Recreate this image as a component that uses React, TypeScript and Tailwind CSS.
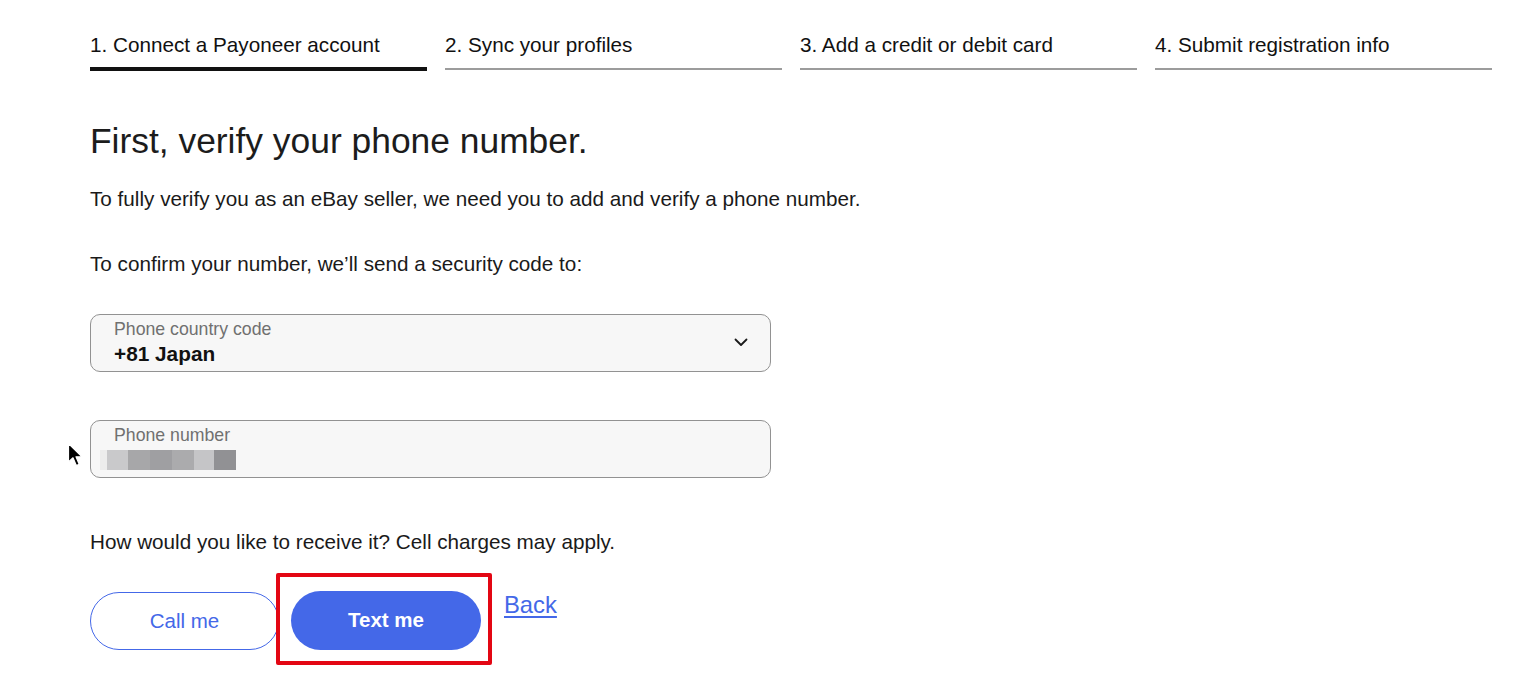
import React from "react";

const tabs = [
  "1. Connect a Payoneer account",
  "2. Sync your profiles",
  "3. Add a credit or debit card",
  "4. Submit registration info",
];

const blocks = [
  { w: 7, c: "#ececec" },
  { w: 21, c: "#c9c9cb" },
  { w: 22, c: "#a7a7a9" },
  { w: 22, c: "#9f9fa2" },
  { w: 22, c: "#ababad" },
  { w: 20, c: "#c5c5c7" },
  { w: 22, c: "#919194" },
];

export default function App() {
  return (
    <div
      className="relative w-[1536px] h-[686px] bg-white overflow-hidden pl-[90px] pr-[44px] pt-[32px] text-[#1a1a1a]"
      style={{ fontFamily: '"Liberation Sans", Arial, sans-serif' }}
    >
      {/* Tabs */}
      <div className="grid grid-cols-4 gap-x-[18px]">
        {tabs.map((t, i) => (
          <div key={t} className="flex flex-col">
            <div className="text-[20.7px] leading-[26px] h-[35px] text-[#111] whitespace-nowrap">{t}</div>
            {i === 0 ? (
              <div className="h-[4px] bg-[#111]" />
            ) : (
              <div className="h-[2px] mt-[1px] bg-[#9c9c9c]" />
            )}
          </div>
        ))}
      </div>

      <h1 className="mt-[50px] text-[35.4px] leading-[40px] text-[#1c1c1c]">
        First, verify your phone number.
      </h1>
      <p className="mt-[25px] text-[20.7px] leading-[26px]">
        To fully verify you as an eBay seller, we need you to add and verify a phone number.
      </p>
      <p className="mt-[39px] text-[20.7px] leading-[26px]">
        To confirm your number, we’ll send a security code to:
      </p>

      {/* Select */}
      <div className="mt-[37px] w-[681px] h-[58px] rounded-[10px] border border-[#929292] bg-[#f7f7f7] flex items-center pl-[23px] pr-[22px]">
        <div className="flex-1 flex flex-col pb-[1px]">
          <span className="text-[17.7px] leading-[20px] text-[#707070]">Phone country code</span>
          <span className="mt-[3px] text-[20.8px] leading-[24px] font-bold text-[#111]">+81 Japan</span>
        </div>
        <svg width="14" height="9" viewBox="0 0 14 9" className="mb-[1px]">
          <path d="M1.5 1.5 L7 7 L12.5 1.5" fill="none" stroke="#1a1a1a" strokeWidth="1.8" strokeLinecap="round" strokeLinejoin="round" />
        </svg>
      </div>

      {/* Phone number */}
      <div className="mt-[48px] w-[681px] h-[58px] rounded-[10px] border border-[#929292] bg-[#f7f7f7] flex flex-col pl-[23px] pt-[4px]">
        <span className="text-[17.7px] leading-[20px] text-[#707070]">Phone number</span>
        <div className="mt-[5px] -ml-[14px] flex h-[20px]">
          {blocks.map((b, i) => (
            <div key={i} className="h-full" style={{ width: b.w, backgroundColor: b.c }} />
          ))}
        </div>
      </div>

      <p className="mt-[51px] text-[20.7px] leading-[26px]">
        How would you like to receive it? Cell charges may apply.
      </p>

      {/* Buttons */}
      <div className="mt-[37px] flex items-start">
        <button className="w-[189px] h-[58px] rounded-full border border-[#4468e8] text-[#4468e8] text-[20.5px] bg-white">
          Call me
        </button>
        <div className="relative ml-[12px] -mt-[1px]">
          <button className="w-[190px] h-[59px] rounded-full bg-[#4468e8] text-white text-[20.5px] font-bold">
            Text me
          </button>
          <div className="absolute left-[-15px] right-[-11px] top-[-18px] bottom-[-15px] border-[4px] border-[#e30613] rounded-[2px] pointer-events-none" />
        </div>
        <a className="ml-[23px] mt-[0px] text-[23.8px] leading-[26px] text-[#4468e8] underline underline-offset-[3px] decoration-[1.5px]" href="#">
          Back
        </a>
      </div>

      {/* Mouse cursor */}
      <svg className="absolute left-[67px] top-[442px]" width="18" height="27" viewBox="0 0 18 27">
        <path d="M1.5 1.5 L1.5 20 L6 15.8 L9.3 23.5 L12.2 22.3 L9 14.8 L15 14.8 Z" fill="#000" stroke="#fff" strokeWidth="1.2" strokeLinejoin="round" />
      </svg>
    </div>
  );
}
